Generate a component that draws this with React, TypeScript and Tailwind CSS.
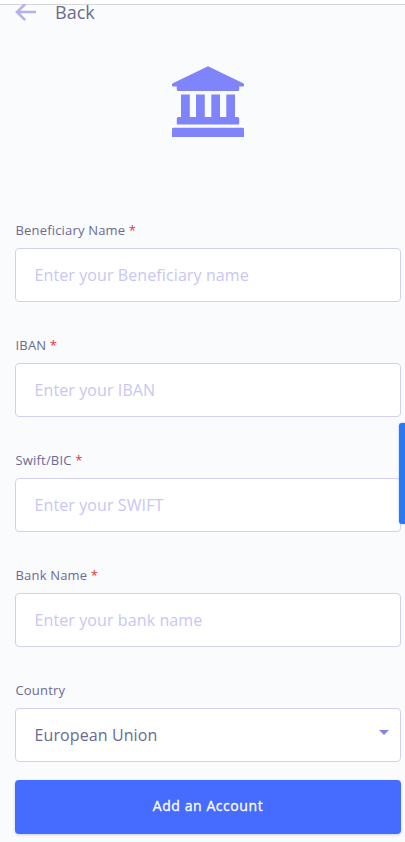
type FieldProps = { label: string; placeholder: string };

function Field({ label, placeholder }: FieldProps) {
  return (
    <label className="mb-[33px] block">
      <span className="block h-7 pl-[0.5px] text-[13px] leading-5 tracking-[0.18px] text-[#6a6a94]">
        {label} <span className="text-[#e8323c]">*</span>
      </span>
      <input
        type="text"
        placeholder={placeholder}
        className="block h-[54px] w-full rounded border border-[#d3d1ee] bg-white px-[18.5px] text-base tracking-[0.1px] text-[#6a6a94] outline-none placeholder:text-[#c8c6f4]"
      />
    </label>
  );
}

function BankIcon() {
  return (
    <svg width="72" height="72" viewBox="0 0 72 72" fill="#8084fb" aria-hidden="true">
      <path d="M36 0.3 L71.2 17.3 Q72 17.8 72 18.8 V19.8 Q72 20.4 71.2 20.4 H67.2 V23.8 Q67.2 25 66 25 H6 Q4.8 25 4.8 23.8 V20.4 H0.8 Q0 20.4 0 19.8 V18.8 Q0 17.8 0.8 17.3 Z" />
      <path d="M9 28.6 H17.8 V51 H24 V28.6 H32.8 V51 H39.3 V28.6 H48 V51 H54.3 V28.6 H63 V51 H65.5 Q67.2 51 67.2 52.7 V58.6 H4.8 V52.7 Q4.8 51 6.5 51 H9 Z" />
      <path d="M1.2 61.7 H70.8 Q72 61.7 72 63 V71 H0 V63 Q0 61.7 1.2 61.7 Z" />
    </svg>
  );
}

export default function App() {
  return (
    <div
      className="relative h-[842px] w-[405px] overflow-hidden bg-[#fafbfd]"
      style={{ fontFamily: '"Open Sans", "Noto Sans", sans-serif' }}
    >
      <div className="h-[5px] border-b border-[#d4d6d8] bg-white" />
      <header className="flex h-[61px] items-start pl-[15px]">
        <svg width="22" height="18" viewBox="0 0 22 18" className="-mt-px" fill="none" stroke="#b4aff0" strokeWidth="2.6" aria-hidden="true">
          <path d="M21 8 H2 M10.2 0 L2 8 L10.2 16.2" />
        </svg>
        <span className="-mt-[5px] ml-[18px] text-lg leading-6 text-[#6a6a94]">Back</span>
      </header>
      <div className="flex h-[154px] justify-center pl-[11px]">
        <BankIcon />
      </div>
      <form className="pl-[15px] pr-1">
        <Field label="Beneficiary Name" placeholder="Enter your Beneficiary name" />
        <Field label="IBAN" placeholder="Enter your IBAN" />
        <Field label="Swift/BIC" placeholder="Enter your SWIFT" />
        <Field label="Bank Name" placeholder="Enter your bank name" />
        <div className="mb-[18px]">
          <span className="block h-7 pl-[0.5px] text-[13px] leading-5 tracking-[0.18px] text-[#6a6a94]">Country</span>
          <div className="flex h-[54px] items-center justify-between rounded border border-[#d3d1ee] bg-white pl-[18.5px] pr-[11px] text-base tracking-[0.1px] text-[#6a6a94]">
            <span>European Union</span>
            <svg width="10" height="5" viewBox="0 0 10 5" className="mb-[5px]" fill="#8583ea" aria-hidden="true">
              <path d="M0 0 H10 L5 5 Z" />
            </svg>
          </div>
        </div>
        <button
          type="button"
          className="block h-[54px] w-full rounded bg-[#466bff] pb-[3px] text-sm font-medium tracking-[0.57px] text-white shadow-[0_1px_3px_rgba(50,50,93,0.2)] [-webkit-text-stroke:0.3px_white]"
        >
          Add an Account
        </button>
      </form>
      <div className="absolute right-0 top-[423px] h-[101px] w-[6px] rounded-l-[3px] bg-[#2879f3] shadow-[0_0_2px_rgba(40,121,243,0.5)]" />
    </div>
  );
}
